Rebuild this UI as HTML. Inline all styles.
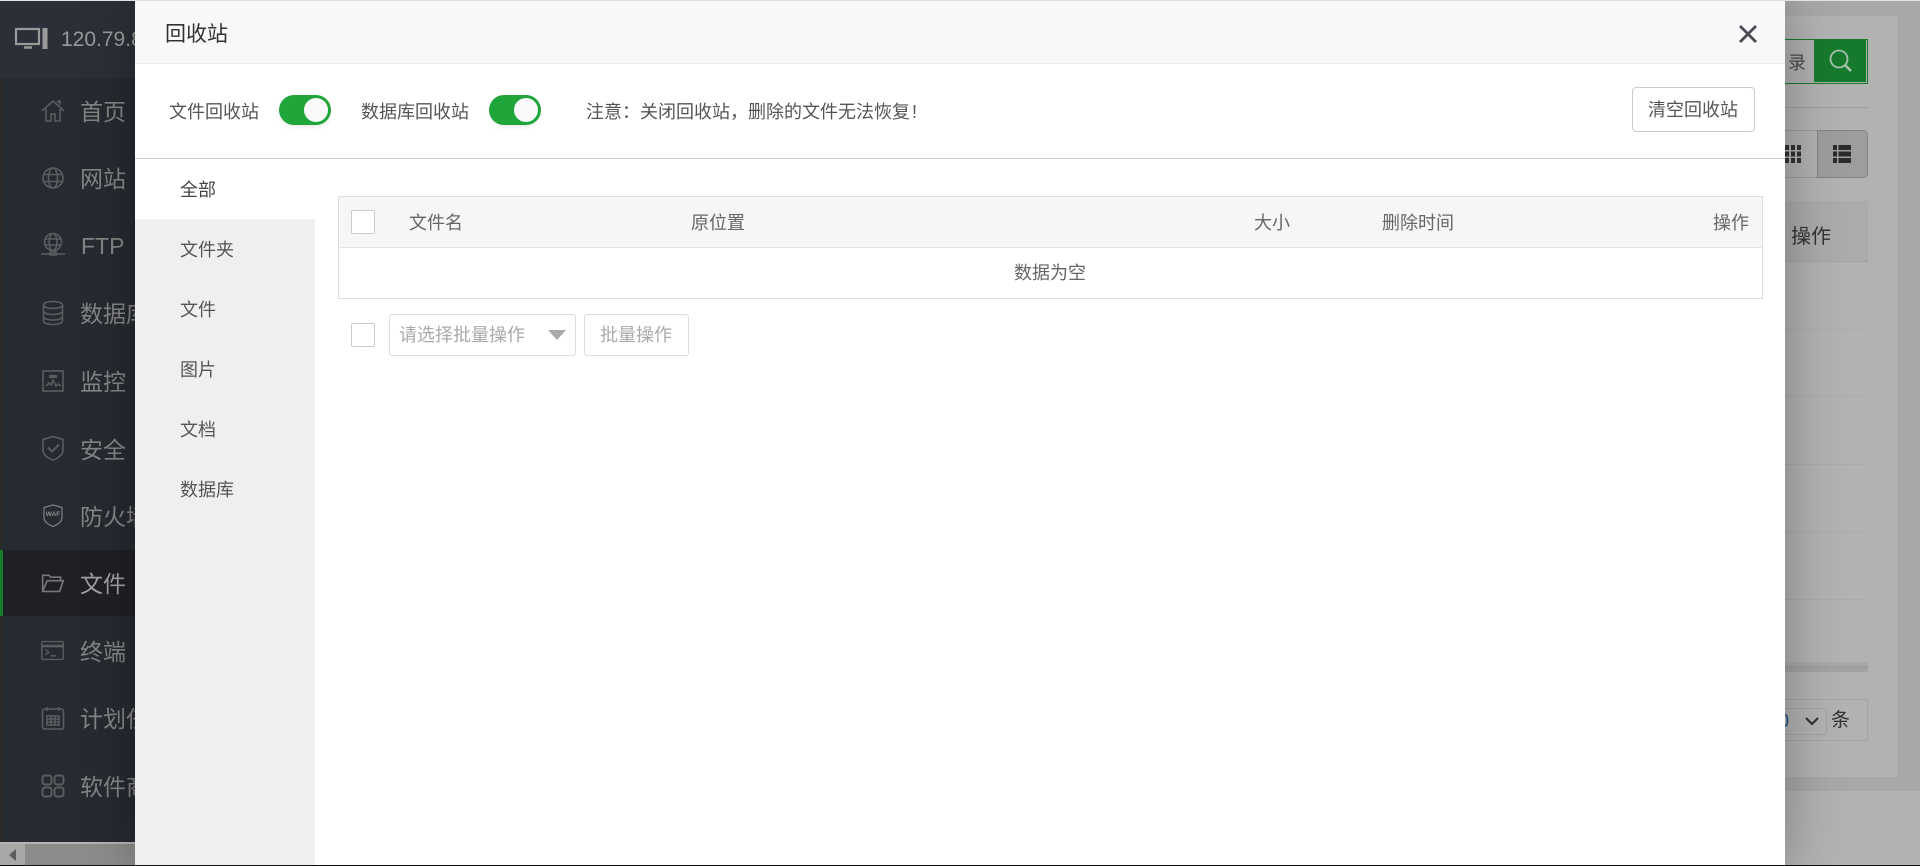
<!DOCTYPE html>
<html lang="zh">
<head>
<meta charset="utf-8">
<title>回收站</title>
<style>
html,body{margin:0;padding:0;width:1920px;height:866px;overflow:hidden;background:#b2b2b2}
body{position:relative;font-family:"Liberation Sans","Noto Sans CJK SC",sans-serif;color:#666}
.a{position:absolute;box-sizing:border-box}
.t{position:absolute;white-space:nowrap;line-height:24px;height:24px;font-size:18px}
.nav{position:absolute;left:80px;white-space:nowrap;font-size:23px;line-height:32px;height:32px;color:#848484}
.ic{position:absolute;left:39px;width:28px;height:28px;fill:none;stroke:#5a5d60;stroke-width:1.6}
.sw{position:absolute;width:52px;height:30px;border-radius:15px;background:#20a53a;box-shadow:0 3px 6px -2px rgba(0,0,0,.12)}
.sw i{position:absolute;right:3px;top:3px;width:24px;height:24px;border-radius:50%;background:#fafafa}
.cb{position:absolute;left:351px;width:24px;height:24px;border:1px solid #ccc;border-radius:2px;background:#fff;box-sizing:border-box}
.li{position:absolute;left:135px;width:180px;height:60px;background:#efefef}
.line{position:absolute;left:1785px;width:83px;height:1px;background:#a0a0a0}
</style>
</head>
<body>
<!-- top strip -->
<div class="a" style="left:0;top:0;width:1920px;height:1px;background:#dee1e6;z-index:9"></div>

<!-- right background -->
<div class="a" style="left:1785px;top:1px;width:135px;height:790px;background:#a8a8a8"></div>
<div class="a" style="left:1785px;top:16px;width:113px;height:761px;background:#b2b2b2"></div>
<div class="a" style="left:1785px;top:39px;width:83px;height:45px;border:1px solid #167a2c;border-left:0;background:#b0b0b0"></div>
<div class="t" style="left:1788px;top:51px;color:#4a4a4a">录</div>
<div class="a" style="left:1814px;top:40px;width:52px;height:42px;background:#167a2c"></div>
<svg class="a" style="left:1827px;top:48px;width:26px;height:26px" viewBox="0 0 26 26" fill="none" stroke="#a8c0ae" stroke-width="1.8"><circle cx="12" cy="11" r="8.500"/><path d="M18 17l6 6" stroke-width="2.400"/></svg>
<div class="line" style="top:107px"></div>
<div class="a" style="left:1785px;top:130px;width:83px;height:48px;border:1px solid #9a9a9a;border-left:0;border-radius:0 5px 5px 0;background:#b0b0b0"></div>
<div class="a" style="left:1817px;top:130px;width:51px;height:48px;border:1px solid #858585;border-radius:0 5px 5px 0;background:#9d9d9d"></div>
<svg class="a" style="left:1785px;top:145px;width:16px;height:18px" viewBox="0 0 16 18" fill="#333"><rect x="0" y="0" width="4" height="5"/><rect x="6" y="0" width="4" height="5"/><rect x="12" y="0" width="4" height="5"/><rect x="0" y="6.500" width="4" height="5"/><rect x="6" y="6.500" width="4" height="5"/><rect x="12" y="6.500" width="4" height="5"/><rect x="0" y="13" width="4" height="5"/><rect x="6" y="13" width="4" height="5"/><rect x="12" y="13" width="4" height="5"/></svg>
<svg class="a" style="left:1833px;top:145px;width:18px;height:18px" viewBox="0 0 18 18" fill="#2b2b2b"><rect x="0" y="0" width="4" height="5"/><rect x="5.500" y="0" width="12.500" height="5"/><rect x="0" y="6.500" width="4" height="5"/><rect x="5.500" y="6.500" width="12.500" height="5"/><rect x="0" y="13" width="4" height="5"/><rect x="5.500" y="13" width="12.500" height="5"/></svg>
<div class="a" style="left:1785px;top:201px;width:83px;height:61px;background:#ababab;border-bottom:1px solid #a2a2a2"></div>
<div class="t" style="left:1791px;top:225px;font-size:20px;color:#333">操作</div>
<div class="line" style="top:329px;background:#aaa"></div>
<div class="line" style="top:396px;background:#aaa"></div>
<div class="line" style="top:464px;background:#aaa"></div>
<div class="line" style="top:531px;background:#aaa"></div>
<div class="line" style="top:599px;background:#aaa"></div>
<div class="a" style="left:1785px;top:662px;width:83px;height:4px;background:#a9a9a9"></div>
<div class="a" style="left:1785px;top:666px;width:83px;height:6px;background:#a2a2a2;border-top:1px solid #9a9a9a"></div>
<div class="a" style="left:1785px;top:699px;width:83px;height:42px;border:1px solid #a4a4a4;border-left:0"></div>
<div class="a" style="left:1785px;top:708px;width:42px;height:27px;border:1px solid #a2a2a2;border-left:0;border-radius:0 3px 3px 0"></div>
<div class="t" style="left:1779px;top:709px;color:#1f4d7a;font-size:18px">0</div>
<svg class="a" style="left:1804px;top:716px;width:16px;height:10px" viewBox="0 0 16 10" fill="none" stroke="#333" stroke-width="2.200"><path d="M2 2l6 6 6-6"/></svg>
<div class="t" style="left:1831px;top:709px;font-size:19px;color:#333">条</div>
<div class="a" style="left:1785px;top:777px;width:135px;height:14px;background:#a8a8a8"></div>

<!-- sidebar -->
<div class="a" style="left:0;top:1px;width:135px;height:841px;background:#262a31"></div>
<div class="a" style="left:0;top:1px;width:135px;height:77px;background:#2b2f37"></div>
<div class="a" style="left:0;top:78px;width:3px;height:764px;background:#2b2c2a"></div>
<div class="a" style="left:0;top:550px;width:135px;height:66px;background:#1e2025"></div>
<div class="a" style="left:0;top:550px;width:3px;height:66px;background:#167a2c"></div>

<svg class="a" style="left:14px;top:26px;width:36px;height:26px" viewBox="0 0 36 26" fill="none" stroke="#9a9a9a" stroke-width="2.200"><rect x="2" y="3" width="23" height="15"/><path d="M10 21.500h8" stroke-width="2.500"/><rect x="28.500" y="2" width="5" height="21" fill="#9a9a9a" stroke="none"/></svg>
<div class="t" style="left:61px;top:25px;font-size:21px;line-height:30px;height:30px;color:#9a9a9a">120.79.8.100</div>

<svg class="ic" style="top:97px" viewBox="0 0 28 28"><path d="M3 14L14 4l11 10M7 12v12h5v-7h4v7h5V12M19 6V4h2v4"/></svg>
<div class="nav" style="top:96px">首页</div>
<svg class="ic" style="top:164px" viewBox="0 0 28 28"><circle cx="14" cy="14" r="10"/><ellipse cx="14" cy="14" rx="4.500" ry="10"/><path d="M4 10.500h20M4 17.500h20"/></svg>
<div class="nav" style="top:163px">网站</div>
<svg class="ic" style="top:231px" viewBox="0 0 28 28"><circle cx="14" cy="11" r="8.500"/><ellipse cx="14" cy="11" rx="4" ry="8.500"/><path d="M5.500 8h17M5.500 14h17M2 23h24M11 21h6v3h-6z"/></svg>
<div class="nav" style="top:230px;left:81px">FTP</div>
<svg class="ic" style="top:299px" viewBox="0 0 28 28"><ellipse cx="14" cy="6" rx="9.500" ry="3.500"/><path d="M4.500 6v16c0 2 4 3.500 9.500 3.500s9.500-1.500 9.500-3.500V6M4.500 12c0 2 4 3.500 9.500 3.500s9.500-1.500 9.500-3.500M4.500 17.500c0 2 4 3.500 9.500 3.500s9.500-1.500 9.500-3.500"/></svg>
<div class="nav" style="top:298px">数据库</div>
<svg class="ic" style="top:367px" viewBox="0 0 28 28"><rect x="4" y="4" width="20" height="20"/><path d="M7 19l3-3 2 2 2-5 3 6 2-2 3 2"/><rect x="10" y="8" width="8" height="3" fill="#5a5d60" stroke="none"/></svg>
<div class="nav" style="top:366px">监控</div>
<svg class="ic" style="top:434px" viewBox="0 0 28 28"><path d="M14 2.500l10 3v11c0 4-5 8-10 9.500-5-1.500-10-5.500-10-9.500v-11z"/><path d="M9 13.500l4 4 7-7" stroke-width="2"/></svg>
<div class="nav" style="top:434px">安全</div>
<svg class="ic" style="top:502px;stroke:#7d7f82;stroke-width:1.200" viewBox="0 0 28 28"><path d="M14 3l9 2.500v10c0 4-4 7-9 9-5-2-9-5-9-9v-10z"/><text x="14" y="14" text-anchor="middle" font-size="6.500" font-weight="700" font-family="Liberation Sans" fill="#8a8a8a" stroke="none">WAF</text></svg>
<div class="nav" style="top:501px">防火墙</div>
<svg class="ic" style="top:570px;left:40px;width:25px;height:25px;stroke:#777;stroke-width:1.800" viewBox="0 0 28 28"><path d="M3 24V6h7l2 2h11v4M3 24h19l4-12H8z"/></svg>
<div class="nav" style="top:568px;color:#a0a0a0">文件</div>
<svg class="ic" style="top:638px;left:40px;width:25px;height:25px" viewBox="0 0 28 28"><rect x="2" y="4" width="24" height="20" rx="1.500"/><path d="M2 9h24" stroke-width="3"/><path d="M6 13l4 3-4 3M12 20h6"/></svg>
<div class="nav" style="top:636px">终端</div>
<svg class="ic" style="top:704px" viewBox="0 0 28 28"><rect x="3.500" y="5" width="21" height="20" rx="2"/><path d="M8 3v4M20 3v4M8 12h12v9H8zM8 15h12M8 18h12M12 12v9M16 12v9"/></svg>
<div class="nav" style="top:703px">计划任务</div>
<svg class="ic" style="top:772px;stroke-width:2" viewBox="0 0 28 28"><rect x="3.500" y="3.500" width="9" height="9" rx="2.500"/><rect x="15.500" y="3.500" width="9" height="9" rx="2.500"/><rect x="3.500" y="15.500" width="9" height="9" rx="2.500"/><rect x="15.500" y="15.500" width="9" height="9" rx="2.500"/></svg>
<div class="nav" style="top:771px">软件商店</div>

<!-- bottom horizontal scrollbar -->
<div class="a" style="left:0;top:842px;width:135px;height:23px;background:#a8a8a8;border-top:2px solid #b4b4b4"></div>
<div class="a" style="left:25px;top:844px;width:1895px;height:21px;background:#8c8c8c"></div>
<svg class="a" style="left:8px;top:848px;width:10px;height:14px" viewBox="0 0 10 14"><path d="M8 1v12L1 7z" fill="#5c5c5c"/></svg>
<div class="a" style="left:1785px;top:791px;width:135px;height:74px;background:#b2b2b2"></div>
<div class="a" style="left:0;top:865px;width:1920px;height:1px;background:#111;z-index:9"></div>

<!-- modal -->
<div class="a" style="left:135px;top:1px;width:1650px;height:864px;background:#fff;box-shadow:1px 1px 50px rgba(0,0,0,.3);overflow:hidden">
  <div class="a" style="left:0;top:0;width:1650px;height:63px;background:#f8f8f8;border-bottom:1px solid #eee"></div>
  <div class="t" style="left:30px;top:22px;font-size:21px;color:#333">回收站</div>
  <svg class="a" style="left:1603px;top:23px;width:20px;height:20px" viewBox="0 0 20 20" fill="none" stroke="#4a4a55" stroke-width="2.800"><path d="M2 2l16 16M18 2L2 18"/></svg>

  <div class="t" style="left:34px;top:99px;color:#555">文件回收站</div>
  <div class="sw" style="left:144px;top:94px"><i></i></div>
  <div class="t" style="left:226px;top:99px;color:#555">数据库回收站</div>
  <div class="sw" style="left:354px;top:94px"><i></i></div>
  <div class="t" style="left:451px;top:99px;color:#555">注意：关闭回收站，删除的文件无法恢复<span style="margin-left:2px">!</span></div>
  <div class="a" style="left:1497px;top:86px;width:123px;height:45px;border:1px solid #ccc;border-radius:4px;background:#fff"></div>
  <div class="t" style="left:1513px;top:97px;color:#555">清空回收站</div>
  <div class="a" style="left:0;top:157px;width:1650px;height:1px;background:#ccc"></div>
</div>

<!-- modal left list -->
<div class="li" style="top:219px"></div><div class="li" style="top:279px"></div><div class="li" style="top:339px"></div><div class="li" style="top:399px"></div><div class="li" style="top:459px"></div><div class="li" style="top:519px"></div>
<div class="a" style="left:135px;top:579px;width:180px;height:286px;background:#efefef"></div>
<div class="t" style="left:180px;top:178px;color:#444">全部</div>
<div class="t" style="left:180px;top:238px;color:#555">文件夹</div>
<div class="t" style="left:180px;top:298px;color:#555">文件</div>
<div class="t" style="left:180px;top:358px;color:#555">图片</div>
<div class="t" style="left:180px;top:418px;color:#555">文档</div>
<div class="t" style="left:180px;top:478px;color:#555">数据库</div>

<!-- table -->
<div class="a" style="left:338px;top:196px;width:1425px;height:103px;border:1px solid #ddd;background:#fff"></div>
<div class="a" style="left:339px;top:197px;width:1423px;height:51px;background:#f6f6f6;border-bottom:1px solid #e2e2e2"></div>
<div class="cb" style="top:210px"></div>
<div class="t" style="left:409px;top:211px">文件名</div>
<div class="t" style="left:691px;top:211px">原位置</div>
<div class="t" style="left:1254px;top:211px">大小</div>
<div class="t" style="left:1382px;top:211px">删除时间</div>
<div class="t" style="left:1713px;top:211px">操作</div>
<div class="t" style="left:1014px;top:261px">数据为空</div>

<div class="cb" style="top:323px"></div>
<div class="a" style="left:389px;top:314px;width:187px;height:42px;border:1px solid #ddd;border-radius:3px;background:#fff"></div>
<div class="t" style="left:399px;top:323px;color:#aaa">请选择批量操作</div>
<svg class="a" style="left:548px;top:330px;width:18px;height:10px" viewBox="0 0 18 10"><path d="M0 0h18L9 10z" fill="#aaa"/></svg>
<div class="a" style="left:584px;top:314px;width:105px;height:42px;border:1px solid #ddd;border-radius:3px;background:#fff"></div>
<div class="t" style="left:600px;top:323px;color:#aaa">批量操作</div>
</body>
</html>
